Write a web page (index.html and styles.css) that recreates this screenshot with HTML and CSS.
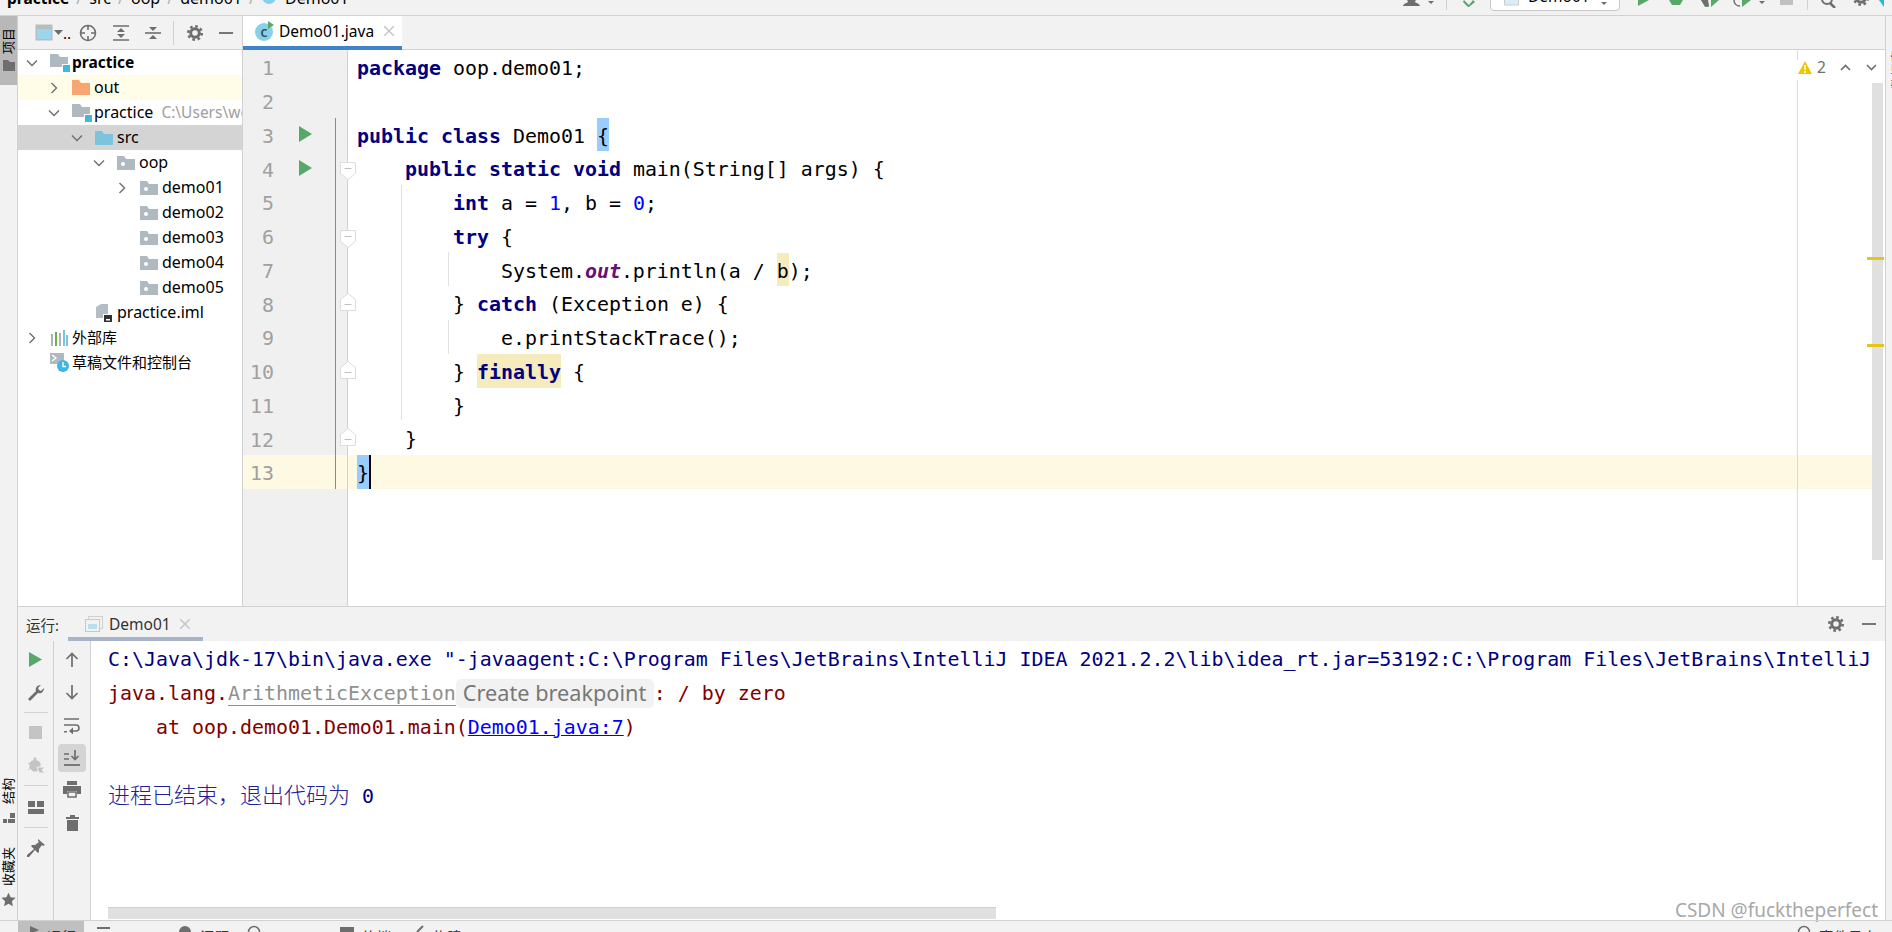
FILE: index.html
```html
<!DOCTYPE html>
<html lang="zh">
    <head>
        <meta charset="UTF-8" />
        <title>practice - Demo01.java</title>
        <link rel="stylesheet" href="styles.css">
    </head>
    <body>
        <svg class="defs" width="0" height="0">
            <symbol id="chev-r" viewBox="0 0 12 12"><path d="M3.5 1l5 5-5 5" fill="none" stroke="#6e6e6e" stroke-width="1.4"/></symbol>
            <symbol id="chev-d" viewBox="0 0 12 12"><path d="M1 3.5l5 5 5-5" fill="none" stroke="#6e6e6e" stroke-width="1.4"/></symbol>
            <symbol id="folder" viewBox="0 0 18 14"><path d="M0 0h7l2 3h9v11H0z" fill="#afb9c0"/><circle cx="6" cy="8" r="2" fill="#fff"/></symbol>
            <symbol id="module" viewBox="0 0 20 18"><path d="M0 0h8l2 3h8v10H0z" fill="#afb9c0"/><rect x="12" y="10" width="8" height="8" fill="#fff"/><rect x="13" y="11" width="7" height="7" fill="#40b6e0"/></symbol>
            <symbol id="run" viewBox="0 0 12 14" preserveAspectRatio="none"><path d="M0 0l12 7-12 7z" fill="#59a869"/></symbol>
            <symbol id="fold-down" viewBox="0 0 16 18"><path d="M.5.5h15v11l-7.500 6-7.500-6z" fill="#fff" stroke="#dcdcdc"/><path d="M4.500 6.500h7" stroke="#c0c0c0"/></symbol>
            <symbol id="fold-up" viewBox="0 0 16 18"><path d="M.5 17.500v-11l7.500-6 7.500 6v11z" fill="#fff" stroke="#dcdcdc"/><path d="M4.500 11.500h7" stroke="#c0c0c0"/></symbol>
            <symbol id="gear" viewBox="0 0 16 16"><circle cx="8" cy="8" r="4.300" fill="none" stroke="#6e6e6e" stroke-width="3"/><circle cx="8" cy="8" r="6.700" fill="none" stroke="#6e6e6e" stroke-width="2.600" stroke-dasharray="2.630 2.630"/></symbol>
            <symbol id="minus" viewBox="0 0 16 16"><path d="M0 8h15" stroke="#6e6e6e" stroke-width="2"/></symbol>
        </svg>

        <div class="topbar">
            <div class="crumbs">
                <b>practice</b><i>/</i><span>src</span><i>/</i><span>oop</span><i>/</i><span>demo01</span><i>/</i>
                <svg class="crumb-icon" width="14" height="14"><circle cx="7" cy="7" r="7" fill="#86d1ea"/></svg>
                <span>Demo01</span>
            </div>
            <div class="actions">
                <svg class="act person" width="17" height="6"><path d="M0 6c1-3 4-3 5-4 0-1-1-2-1-2h9s-1 1-1 2c1 1 4 1 5 4z" fill="#6e6e6e"/></svg>
                <svg class="act person-arrow" width="6" height="4"><path d="M0 0h6L3 3z" fill="#6e6e6e"/></svg>
                <span class="act-sep first-sep"></span>
                <svg class="act hammer" width="12" height="7"><path d="M1 0l5 5 4-5 2 2-6 5h-1L0 2z" fill="#59a869"/></svg>
                <div class="config"><svg width="15" height="6"><rect x=".5" y="-4" width="14" height="9" fill="#d8eef5" stroke="#ccc"/></svg><span class="config-name">Demo01</span><svg class="config-arrow" width="6" height="4"><path d="M0 0h6L3 3z" fill="#6e6e6e"/></svg></div>
                <svg class="act tool-run" width="11" height="6"><path d="M0 0h11L0 6z" fill="#59a869"/></svg>
                <svg class="act tool-debug" width="14" height="6"><path d="M0 0h14l-3 5H3z" fill="#59a869"/></svg>
                <svg class="act tool-cover" width="18" height="7"><path d="M0 0h6l2 7H4zM10 0h8l-8 7z" fill="#59a869"/><path d="M0 0h7l1 6H4z" fill="#6e6e6e"/></svg>
                <svg class="act tool-prof" width="18" height="7"><path d="M1 0c0 4 3 6 6 6" fill="none" stroke="#6e6e6e" stroke-width="1.500"/><path d="M9 0h9L9 7z" fill="#59a869"/></svg>
                <svg class="act tool-arrow" width="6" height="4"><path d="M0 0h6L3 3z" fill="#6e6e6e"/></svg>
                <span class="act tool-stop"></span>
                <span class="act-sep"></span>
                <svg class="act tool-search" width="16" height="8"><circle cx="6" cy="-1" r="5" fill="none" stroke="#6e6e6e" stroke-width="2"/><path d="M9 3l5 5" stroke="#6e6e6e" stroke-width="2.500"/></svg>
                <svg class="act tool-gear" width="16" height="6" viewBox="0 10 16 6"><use href="#gear" width="16" height="16" y="0"/></svg>
                <svg class="act tool-logo" width="5" height="7"><path d="M5 0v7L0 0z" fill="#25b7d3"/></svg>
            </div>
        </div>

        <div class="main">
            <div class="strip-left">
                <div class="side-tab active">
                    <span class="side-text">项目</span>
                    <svg width="12" height="11"><path d="M0 0h5l2 2h5v9H0z" fill="#6e6e6e"/></svg>
                </div>
                <div class="side-tab structure">
                    <span class="side-text">结构</span>
                    <svg width="12" height="11"><path d="M0 7h4v4H0zM5 7h7v4H5zM7 1h5v5H7z" fill="#6e6e6e"/></svg>
                </div>
                <div class="side-tab favorites">
                    <span class="side-text">收藏夹</span>
                    <svg width="15" height="15" viewBox="0 0 24 24"><path d="M12 1l3.400 7.400 8 .9-6 5.500 1.700 8L12 18.700 4.900 22.800l1.700-8-6-5.500 8-.9z" fill="#6e6e6e"/></svg>
                </div>
            </div>

            <div class="workspace">
                <div class="upper">
                    <div class="project">
                        <div class="panel-head">
                            <svg class="h-win" width="18" height="17"><rect x=".5" y=".5" width="17" height="16" fill="#b8bcc0"/><rect x="2" y="5" width="14" height="10" fill="#9cd6ee"/></svg>
                            <svg class="h-arrow" width="9" height="5"><path d="M0 0h9L4.500 5z" fill="#6e6e6e"/></svg>
                            <span class="h-dots">..</span>
                            <svg class="h-locate" width="18" height="18"><circle cx="9" cy="9" r="7.500" fill="none" stroke="#6e6e6e" stroke-width="1.600"/><path d="M9 1v5M9 12v5M1 9h5M12 9h5" stroke="#6e6e6e" stroke-width="1.600"/></svg>
                            <svg class="h-expand" width="16" height="16"><path d="M0 1h16M0 15h16" stroke="#6e6e6e" stroke-width="1.600"/><path d="M8 3l4 4H4zM8 13l4-4H4z" fill="#6e6e6e"/></svg>
                            <svg class="h-collapse" width="16" height="16"><path d="M0 8h16" stroke="#6e6e6e" stroke-width="1.600"/><path d="M8 6l4-4H4zM8 10l4 4H4z" fill="#6e6e6e"/></svg>
                            <span class="h-sep"></span>
                            <svg class="h-gear" width="16" height="16"><use href="#gear"/></svg>
                            <svg class="h-minus" width="15" height="16"><use href="#minus"/></svg>
                        </div>
                        <div class="tree">
                            <div class="row lv0"><svg class="chev"><use href="#chev-d"/></svg><svg class="ic ic-mod"><use href="#module"/></svg><b>practice</b></div>
                            <div class="row lv1 excluded"><svg class="chev"><use href="#chev-r"/></svg><svg class="ic" width="18" height="15"><path d="M0 0h7l2 3h9v12H0z" fill="#f6a673"/></svg><span>out</span></div>
                            <div class="row lv1"><svg class="chev"><use href="#chev-d"/></svg><svg class="ic ic-mod"><use href="#module"/></svg><span>practice</span><span class="path">C:\Users\wo</span></div>
                            <div class="row lv2 selected"><svg class="chev"><use href="#chev-d"/></svg><svg class="ic" width="18" height="14"><path d="M0 0h7l2 3h9v11H0z" fill="#7cc3dd"/></svg><span>src</span></div>
                            <div class="row lv3"><svg class="chev"><use href="#chev-d"/></svg><svg class="ic ic-pkg"><use href="#folder"/></svg><span>oop</span></div>
                            <div class="row lv4"><svg class="chev"><use href="#chev-r"/></svg><svg class="ic ic-pkg"><use href="#folder"/></svg><span>demo01</span></div>
                            <div class="row lv4"><span class="chev"></span><svg class="ic ic-pkg"><use href="#folder"/></svg><span>demo02</span></div>
                            <div class="row lv4"><span class="chev"></span><svg class="ic ic-pkg"><use href="#folder"/></svg><span>demo03</span></div>
                            <div class="row lv4"><span class="chev"></span><svg class="ic ic-pkg"><use href="#folder"/></svg><span>demo04</span></div>
                            <div class="row lv4"><span class="chev"></span><svg class="ic ic-pkg"><use href="#folder"/></svg><span>demo05</span></div>
                            <div class="row lv2"><span class="chev"></span><svg class="ic" width="18" height="18"><path d="M1 3l5-3h7v14H1z" fill="#b4bdc3"/><rect x="8" y="10" width="10" height="8" fill="#fff"/><rect x="9" y="11" width="8" height="7" fill="#333"/><rect x="11" y="15" width="4" height="1.500" fill="#fff"/></svg><span>practice.iml</span></div>
                            <div class="row lv0"><svg class="chev"><use href="#chev-r"/></svg><svg class="ic" width="18" height="16"><path d="M1 4h2v12H1zM9 3h2v13H9z" fill="#a9b3b9"/><path d="M5 2h2v14H5z" fill="#62b543"/><path d="M13 0h2v16h-2zM16 5h2v11h-2z" fill="#7cc3dd"/></svg><span class="zh">外部库</span></div>
                            <div class="row lv0"><span class="chev"></span><svg class="ic ic-wide" width="20" height="19"><path d="M0 0h14v11H0z" fill="#afb9c0"/><path d="M2 2l4 3-4 3" fill="none" stroke="#fff" stroke-width="1.300"/><circle cx="13" cy="13" r="6" fill="#40b6e0"/><path d="M13 9v4.500h3" fill="none" stroke="#fff" stroke-width="1.300"/></svg><span class="zh">草稿文件和控制台</span></div>
                        </div>
                    </div>

                    <div class="editor">
                        <div class="tabs">
                            <div class="tab">
                                <svg width="20" height="20"><circle cx="9" cy="11" r="9" fill="#86d1ea"/><text class="tab-c" x="5.500" y="15.500">C</text><path d="M13 0l6 4-6 4z" fill="#59a869"/></svg>
                                <span class="tab-name">Demo01.java</span>
                                <svg class="tab-x" width="10" height="10"><path d="M0 0l10 10M10 0L0 10" stroke="#c4c4c4" stroke-width="1.400"/></svg>
                            </div>
                        </div>
                        <div class="editor-body">
                            <div class="gutter">
                                <div class="g-row"><span class="num">1</span></div>
                                <div class="g-row"><span class="num">2</span></div>
                                <div class="g-row mod"><span class="num">3</span><svg class="g-run"><use href="#run"/></svg></div>
                                <div class="g-row mod"><span class="num">4</span><svg class="g-run"><use href="#run"/></svg><svg class="fold fold-d"><use href="#fold-down"/></svg></div>
                                <div class="g-row mod"><span class="num">5</span></div>
                                <div class="g-row mod"><span class="num">6</span><svg class="fold fold-d"><use href="#fold-down"/></svg></div>
                                <div class="g-row mod"><span class="num">7</span></div>
                                <div class="g-row mod"><span class="num">8</span><svg class="fold fold-u"><use href="#fold-up"/></svg></div>
                                <div class="g-row mod"><span class="num">9</span></div>
                                <div class="g-row mod"><span class="num">10</span><svg class="fold fold-u"><use href="#fold-up"/></svg></div>
                                <div class="g-row mod"><span class="num">11</span></div>
                                <div class="g-row mod"><span class="num">12</span><svg class="fold fold-u"><use href="#fold-up"/></svg></div>
                                <div class="g-row mod current"><span class="num">13</span></div>
                            </div>
                            <div class="code">
                                <div class="line"><b>package</b> oop.demo01;</div>
                                <div class="line"> </div>
                                <div class="line"><b>public class</b> Demo01 <span class="brace">{</span></div>
                                <div class="line">    <b>public static void</b> main(String[] args) {</div>
                                <div class="line">        <b>int</b> a = <em>1</em>, b = <em>0</em>;</div>
                                <div class="line">        <b>try</b> {</div>
                                <div class="line">            System.<u>out</u>.println(a / <span class="mark">b</span>);</div>
                                <div class="line">        } <b>catch</b> (Exception e) {</div>
                                <div class="line">            e.printStackTrace();</div>
                                <div class="line">        } <b class="mark">finally</b> {</div>
                                <div class="line">        }</div>
                                <div class="line">    }</div>
                                <div class="line current"><span class="brace">}</span><span class="caret"></span></div>

                                <span class="guide guide-a"></span>
                                <span class="guide guide-b"></span>
                                <span class="guide guide-c"></span>
                                <span class="margin-top"></span>
                                <span class="margin-line"></span>
                                <div class="inspect">
                                    <svg width="14" height="13"><path d="M7 0l7 13H0z" fill="#f2c500"/><path d="M7 4v5M7 10v2" stroke="#fff" stroke-width="1.600"/></svg>
                                    <span class="inspect-count">2</span>
                                    <svg class="inspect-up" width="11" height="7"><path d="M1 6l4.500-4.500L10 6" fill="none" stroke="#6e6e6e" stroke-width="1.600"/></svg>
                                    <svg class="inspect-down" width="11" height="7"><path d="M1 1l4.500 4.500L10 1" fill="none" stroke="#6e6e6e" stroke-width="1.600"/></svg>
                                </div>
                                <div class="vscroll"></div>
                                <span class="err-mark err-a"></span>
                                <span class="err-mark err-b"></span>
                            </div>
                        </div>
                    </div>
                </div>

                <div class="runpanel">
                    <div class="run-head">
                        <span class="run-label">运行:</span>
                        <div class="run-tab">
                            <svg width="18" height="16"><rect x="3.500" y=".5" width="14" height="12" fill="#f2f2f2" stroke="#d0d0d0"/><rect x=".5" y="3.500" width="14" height="12" fill="#f2f2f2" stroke="#c8c8c8"/><rect x="3" y="8" width="9" height="5" fill="#b9e0ee"/></svg>
                            <span class="run-name">Demo01</span>
                            <svg class="tab-x" width="10" height="10"><path d="M0 0l10 10M10 0L0 10" stroke="#c4c4c4" stroke-width="1.400"/></svg>
                        </div>
                        <svg class="run-gear" width="16" height="16"><use href="#gear"/></svg>
                        <svg class="run-minus" width="15" height="16"><use href="#minus"/></svg>
                    </div>
                    <div class="run-body">
                        <div class="tool-col">
                            <div class="tool"><svg width="13" height="15"><use href="#run" width="13" height="15"/></svg></div>
                            <div class="tool"><svg width="18" height="18"><path d="M1 15l8-8c-1-3 1-6 5-6l-3 3 1 2 2 1 3-3c0 4-3 6-6 5l-8 8z" fill="#6e6e6e"/></svg></div>
                            <span class="tool-sep"></span>
                            <div class="tool"><span class="stop"></span></div>
                            <div class="tool"><svg width="18" height="18"><path d="M5 4h6l2 2v5l-3 3H6L3 11V6zM1 6l3 2M1 13l3-2M7 1h2v3H7z" fill="#c4c4c4" stroke="#c4c4c4"/><path d="M10 10h8l-3 3 3 3h-6z" fill="#c4c4c4" stroke="#f2f2f2"/></svg></div>
                            <span class="tool-sep wide"></span>
                            <div class="tool"><svg width="16" height="13"><path d="M0 0h7v6H0zM9 0h7v6H9zM0 8h16v5H0z" fill="#6e6e6e"/></svg></div>
                            <span class="tool-sep"></span>
                            <div class="tool"><svg width="18" height="18"><path d="M11 0l7 6-2 1-1-1-3 4 0 3-1 1-3-3-6 7-2 0 0-2 7-6-3-3 1-1 3 0 4-3-1-1z" fill="#6e6e6e"/></svg></div>
                        </div>
                        <div class="tool-col second">
                            <div class="tool"><svg width="14" height="15"><path d="M7 15V2M1.500 7L7 1.500 12.500 7" fill="none" stroke="#6e6e6e" stroke-width="1.700"/></svg></div>
                            <div class="tool"><svg width="14" height="15"><path d="M7 0v13M1.500 8L7 13.500 12.500 8" fill="none" stroke="#6e6e6e" stroke-width="1.700"/></svg></div>
                            <div class="tool"><svg width="16" height="16"><path d="M0 1h15M0 7h12c4 0 4 6 0 6H7" fill="none" stroke="#6e6e6e" stroke-width="1.600"/><path d="M9 9.500L5 13l4 3.500zM0 13h3v1.600H0z" fill="#6e6e6e"/></svg></div>
                            <div class="tool on"><svg width="16" height="16"><path d="M0 15h16" stroke="#6e6e6e" stroke-width="1.800"/><path d="M0 4h5M0 9h5" stroke="#6e6e6e" stroke-width="1.600"/><path d="M11 0v9M7.500 6l3.500 3.500L14.500 6" fill="none" stroke="#6e6e6e" stroke-width="1.700"/></svg></div>
                            <div class="tool"><svg width="18" height="17"><path d="M4 0h10v4H4zM0 5h18v8h-4v-3H4v3H0z" fill="#6e6e6e"/><path d="M5 11h8v5H5z" fill="none" stroke="#6e6e6e" stroke-width="1.500"/></svg></div>
                            <div class="tool"><svg width="13" height="16"><path d="M4 0h5v2h4v2H0V2h4zM1 5h11v11H1z" fill="#6e6e6e"/></svg></div>
                        </div>
                        <div class="console">
                            <div class="line out">C:\Java\jdk-17\bin\java.exe "-javaagent:C:\Program Files\JetBrains\IntelliJ IDEA 2021.2.2\lib\idea_rt.jar=53192:C:\Program Files\JetBrains\IntelliJ</div>
                            <div class="line err">java.lang.<span class="exc">ArithmeticException</span><span class="inlay">Create breakpoint</span>: / by zero</div>
                            <div class="line err">    at oop.demo01.Demo01.main(<a class="link">Demo01.java:7</a>)</div>
                            <div class="line"> </div>
                            <div class="line out exit"><span class="cjk">进程已结束&#65292;退出代码为</span> 0</div>
                            <div class="hscroll"></div>
                            <div class="watermark">CSDN @fucktheperfect</div>
                        </div>
                    </div>
                </div>
            </div>

            <div class="strip-right"><span class="side-text">数据库</span></div>
        </div>

        <div class="statusbar">
            <div class="st-item st-run"><svg width="9" height="8"><path d="M0 2l9 4-9 4z" fill="#6e6e6e"/></svg><span>运行</span></div>
            <div class="st-item st-todo"><svg width="13" height="8"><path d="M0 3h13v2H0z" fill="#6e6e6e"/></svg></div>
            <div class="st-item st-prob"><svg width="14" height="8"><circle cx="7" cy="8" r="6" fill="#6e6e6e"/></svg><span>问题</span></div>
            <div class="st-item st-prof"><svg width="14" height="8"><circle cx="7" cy="8" r="5.500" fill="none" stroke="#6e6e6e" stroke-width="1.500"/></svg></div>
            <div class="st-item st-term"><svg width="14" height="8"><path d="M0 3h14v5H0z" fill="#6e6e6e"/></svg><span>终端</span></div>
            <div class="st-item st-build"><svg width="12" height="8"><path d="M4 8l6-6" stroke="#6e6e6e" stroke-width="2"/></svg><span>构建</span></div>
            <div class="st-item st-log"><svg width="14" height="8"><circle cx="7" cy="8" r="5.500" fill="none" stroke="#6e6e6e" stroke-width="1.500"/></svg><span>事件日志</span></div>
        </div>
    </body>
</html>
```

FILE: styles.css
```css
* {
    margin: 0;
    padding: 0;
    box-sizing: border-box;
}
html,
body {
    width: 100%;
    height: 100%;
    overflow: hidden;
}
body {
    display: flex;
    flex-direction: column;
    background-color: #f2f2f2;
    color: #000;
    font-family: "Noto Sans", "Noto Sans CJK SC", sans-serif;
    font-size: 15px;
}
svg {
    flex: none;
    display: block;
}
.defs {
    position: absolute;
}

/* top bar, cut off by the top of the picture */
.topbar {
    flex: none;
    height: 16px;
    display: flex;
    justify-content: space-between;
    border-bottom: 1px solid #d1d1d1;
    overflow: hidden;
}
.crumbs {
    display: flex;
    align-items: flex-end;
    height: 8px;
    padding-left: 7px;
    white-space: nowrap;
    font-size: 16px;
    line-height: 20px;
}
.crumbs b {
    font-size: 15.500px;
}
.crumbs i {
    font-style: normal;
    color: #b0b0b0;
    width: 20px;
    text-align: center;
    margin-left: 0;
}
.crumb-icon {
    margin: 0 9px 4px 0;
}
.actions {
    position: relative;
    width: 500px;
}
.act,
.act-sep {
    position: absolute;
    top: 0;
}
.person { left: 11px; }
.person-arrow { left: 36px; top: 1px; }
.act-sep {
    left: 415px;
    width: 1px;
    height: 10px;
    background-color: #d0d0d0;
}
.first-sep { left: 54px; }
.hammer { left: 71px; }
.config {
    position: absolute;
    left: 98px;
    top: -4px;
    width: 130px;
    height: 15px;
    display: flex;
    align-items: flex-end;
    padding: 0 12px 4px 13px;
    background-color: #fff;
    border: 1px solid #c8c8c8;
    border-radius: 4px;
}
.config-name {
    font-size: 15.500px;
    line-height: 20px;
    margin-left: 9px;
    height: 7px;
    overflow: hidden;
    display: flex;
    align-items: flex-end;
}
.config-arrow { margin-left: auto; }
.tool-run { left: 246px; }
.tool-debug { left: 277px; }
.tool-cover { left: 309px; }
.tool-prof { left: 341px; }
.tool-arrow { left: 367px; top: 1px; }
.tool-stop {
    left: 388px;
    width: 13px;
    height: 5px;
    background-color: #c0c0c0;
}
.tool-search { left: 429px; }
.tool-gear { left: 461px; }
.tool-logo { left: 487px; }

/* main area */
.main {
    flex: 1;
    min-height: 0;
    display: flex;
}
.strip-left {
    flex: none;
    width: 18px;
    display: flex;
    flex-direction: column;
    border-right: 1px solid #d1d1d1;
}
.side-tab {
    display: flex;
    flex-direction: column;
    align-items: center;
    gap: 6px;
    font-size: 13px;
}
.side-tab.active {
    height: 69px;
    padding-top: 12px;
    background-color: #b8b8b8;
}
.side-tab.structure {
    margin-top: 693px;
    gap: 8px;
}
.side-tab.favorites {
    margin-top: 24px;
}
.side-text {
    writing-mode: vertical-rl;
    text-orientation: sideways;
    transform: rotate(180deg);
    line-height: 17px;
}
.workspace {
    flex: none;
    width: 1868px;
    display: flex;
    flex-direction: column;
    border-right: 1px solid #d1d1d1;
}
.strip-right {
    flex: 1;
    min-width: 0;
    overflow: hidden;
    padding: 34px 0 0 3px;
    font-size: 13px;
}
.upper {
    flex: none;
    height: 590px;
    display: flex;
}

/* project panel */
.project {
    flex: none;
    width: 225px;
    background-color: #fff;
    border-right: 1px solid #d1d1d1;
    overflow: hidden;
}
.panel-head {
    position: relative;
    height: 34px;
    background-color: #f2f2f2;
    border-bottom: 1px solid #d1d1d1;
    display: flex;
    align-items: center;
}
.h-win { margin-left: 17px; }
.h-arrow { margin-left: 1px; }
.h-dots {
    width: 9px;
    font-size: 15px;
    line-height: 20px;
}
.h-locate { margin-left: 7px; }
.h-expand { margin-left: 16px; }
.h-collapse { margin-left: 16px; }
.h-sep {
    width: 1px;
    height: 24px;
    background-color: #d0d0d0;
    margin-left: 12px;
}
.h-gear { margin-left: 13px; }
.h-minus { margin-left: 16px; }
.row {
    height: 25px;
    display: flex;
    align-items: center;
    white-space: nowrap;
    font-size: 16px;
    line-height: 23px;
}
.row > span:not(.chev),
.row > b {
    margin-top: -1px;
}
.lv0 { padding-left: 8px; }
.lv1 { padding-left: 30px; }
.lv2 { padding-left: 53px; }
.lv3 { padding-left: 75px; }
.lv4 { padding-left: 98px; }
.row.excluded {
    background-color: #fffde8;
}
.row.selected {
    background-color: #d4d4d4;
}
.chev {
    flex: none;
    width: 12px;
    height: 12px;
    margin-right: 12px;
}
.ic {
    margin-right: 4px;
}
.ic-mod {
    width: 20px;
    height: 18px;
    margin-right: 2px;
}
.ic-pkg {
    width: 18px;
    height: 14px;
}
.ic-wide {
    margin-right: 2px;
}
.zh {
    font-size: 15px;
}
.row b {
    font-size: 15.500px;
    font-weight: 700;
}
.path {
    color: #a0a0a0;
    margin-left: 8px;
    font-size: 15.500px;
}

/* editor */
.editor {
    flex: 1;
    min-width: 0;
    display: flex;
    flex-direction: column;
}
.tabs {
    flex: none;
    height: 34px;
    border-bottom: 1px solid #d1d1d1;
}
.tab {
    width: 159px;
    height: 34px;
    display: flex;
    align-items: center;
    padding: 0 0 1px 12px;
    background-color: #fff;
    border-bottom: 4px solid #4083c9;
}
.tab-c {
    font-family: "Noto Sans", sans-serif;
    font-size: 11px;
    font-weight: 700;
    fill: #3f4a50;
}
.tab-name {
    margin-left: 4px;
    font-size: 15.500px;
}
.tab-x {
    margin-left: 10px;
}
.editor-body {
    flex: 1;
    min-height: 0;
    display: flex;
    font-family: "DejaVu Sans Mono", "Noto Sans CJK SC", monospace;
    font-size: 19.930px;
}
.gutter {
    flex: none;
    width: 105px;
    background-color: #f0f0f0;
    border-right: 1px solid #d1d1d1;
}
.g-row {
    position: relative;
    height: 33.750px;
    display: flex;
    align-items: center;
}
.g-row.mod::after {
    content: "";
    position: absolute;
    left: 92px;
    top: 0;
    bottom: 0;
    width: 1px;
    background-color: #6f8fb5;
}
.g-row.current {
    background-color: #fef9e3;
}
.num {
    width: 31px;
    padding-top: 4px;
    text-align: right;
    color: #a0a0a0;
}
.g-run {
    width: 13px;
    height: 16px;
    margin-left: 25px;
}
.fold {
    position: absolute;
    left: 97px;
    width: 16px;
    height: 18px;
    z-index: 2;
}
.fold-d { top: 11px; }
.fold-u { top: 7px; }
.code {
    position: relative;
    flex: 1;
    min-width: 0;
    background-color: #fff;
    color: #000;
}
.line {
    height: 33.750px;
    line-height: 33.750px;
    white-space: pre;
}
.code .line {
    padding-left: 9px;
    line-height: 37.750px;
}
.code b {
    color: #000080;
    font-weight: 700;
}
.code em {
    color: #0000ff;
    font-style: normal;
}
.code u {
    color: #660e7a;
    font-style: italic;
    font-weight: 700;
    text-decoration: none;
}
.brace,
.mark {
    display: inline-block;
    height: 33.750px;
    vertical-align: top;
}
.brace {
    background-color: #99ccff;
}
.code b.mark,
.mark {
    background-color: #f6ebbc;
}
.line.current {
    background-color: #fef9e3;
    width: 1524px;
}
.caret {
    display: inline-block;
    width: 2px;
    height: 33.750px;
    vertical-align: top;
    background-color: #000;
}
.guide {
    position: absolute;
    width: 1px;
    background-color: #e0e0e0;
}
.guide-a {
    left: 53px;
    top: 135px;
    height: 235px;
}
.guide-b {
    left: 100px;
    top: 202px;
    height: 34px;
}
.guide-c {
    left: 100px;
    top: 270px;
    height: 34px;
}
.margin-top,
.margin-line {
    position: absolute;
    left: 1449px;
    width: 1px;
    background-color: #dcdcdc;
}
.margin-top {
    top: 0;
    height: 10px;
}
.margin-line {
    top: 30px;
    bottom: 0;
}
.inspect {
    position: absolute;
    top: 10px;
    left: 1450px;
    height: 14px;
    display: flex;
    align-items: center;
    font-family: "Noto Sans", sans-serif;
    font-size: 15.500px;
    color: #6e6e6e;
}
.inspect-count {
    margin-left: 5px;
    line-height: 14px;
}
.inspect-up {
    margin-left: 14px;
}
.inspect-down {
    margin-left: 15px;
}
.vscroll {
    position: absolute;
    top: 33px;
    left: 1524px;
    width: 11px;
    height: 477px;
    background-color: #e0e0e0;
}
.err-mark {
    position: absolute;
    left: 1519px;
    width: 17px;
    height: 3px;
    background-color: #e4c518;
}
.err-a { top: 207px; }
.err-b { top: 294px; }

/* run panel */
.runpanel {
    flex: 1;
    min-height: 0;
    display: flex;
    flex-direction: column;
    border-top: 1px solid #d1d1d1;
}
.run-head {
    flex: none;
    height: 34px;
    display: flex;
    align-items: center;
    background-color: #f2f2f2;
}
.run-label {
    margin-left: 8px;
    width: 42px;
    font-size: 14.500px;
    color: #333;
}
.run-tab {
    width: 135px;
    height: 34px;
    display: flex;
    align-items: center;
    padding: 3px 0 0 17px;
    border-bottom: 4px solid #a8b5c9;
}
.run-name {
    margin-left: 6px;
    font-size: 15.500px;
    color: #333;
}
.run-tab .tab-x {
    margin-left: 9px;
}
.run-gear {
    margin-left: auto;
}
.run-minus {
    margin: 0 8px 0 18px;
}
.run-body {
    position: relative;
    flex: 1;
    min-height: 0;
    display: flex;
}
.tool-col {
    flex: none;
    width: 36px;
    padding-top: 2px;
    display: flex;
    flex-direction: column;
    align-items: center;
    background-color: #f2f2f2;
    border-right: 1px solid #d1d1d1;
}
.tool-col.second {
    width: 37px;
}
.tool {
    flex: none;
    width: 28px;
    height: 33px;
    display: flex;
    align-items: center;
    justify-content: center;
}
.tool.on {
    height: 28px;
    margin: 2px 0 1px;
    background-color: #d4d4d4;
    border-radius: 4px;
}
.tool-sep {
    flex: none;
    width: 24px;
    height: 1px;
    margin: 3px 0;
    background-color: #d1d1d1;
}
.tool-sep.wide {
    margin-bottom: 5px;
}
.stop {
    width: 13px;
    height: 13px;
    background-color: #c4c4c4;
}
.console {
    position: relative;
    flex: 1;
    min-width: 0;
    padding: 2px 0 0 17px;
    background-color: #fff;
    font-family: "DejaVu Sans Mono", "Noto Sans CJK SC", monospace;
    font-size: 19.930px;
}
.out {
    color: #000080;
}
.err {
    color: #7f0000;
}
.exc {
    color: #909090;
    border-bottom: 1px solid #909090;
}
.inlay {
    display: inline-block;
    height: 29px;
    line-height: 27px;
    width: 198px;
    padding-left: 7px;
    vertical-align: top;
    margin-top: 2px;
    background-color: #f2f2f2;
    border-radius: 5px;
    color: #787878;
    font-family: "Noto Sans", sans-serif;
    font-size: 21.700px;
}
.link {
    color: #0000ff;
    text-decoration: underline;
}
.line.exit {
    line-height: 30px;
}
.cjk {
    font-family: "Noto Sans CJK SC", sans-serif;
    font-size: 22px;
    font-weight: 300;
    color: #20209a;
}
.hscroll {
    position: absolute;
    left: 17px;
    bottom: 1px;
    width: 888px;
    height: 12px;
    background-color: #e0e0e0;
    border-top: 1px solid #cfcfcf;
}
.watermark {
    position: absolute;
    right: 7px;
    bottom: -3px;
    font-family: "Noto Sans", sans-serif;
    font-size: 19px;
    color: #a8a8a8;
}

/* bottom bar, cut off by the bottom of the picture */
.statusbar {
    flex: none;
    height: 12px;
    position: relative;
    border-top: 1px solid #d1d1d1;
    overflow: hidden;
}
.st-item {
    position: absolute;
    top: 0;
    height: 11px;
    display: flex;
    align-items: flex-start;
    gap: 8px;
    font-size: 14.500px;
    line-height: 20px;
    color: #333;
}
.st-item svg {
    margin-top: 3px;
}
.st-item span {
    margin-top: 6px;
}
.st-run {
    left: 18px;
    width: 66px;
    padding-left: 12px;
    background-color: #bfbfbf;
}
.st-todo { left: 97px; }
.st-prob { left: 178px; }
.st-prof { left: 247px; }
.st-term { left: 340px; }
.st-build { left: 413px; }
.st-log { left: 1797px; }
```
